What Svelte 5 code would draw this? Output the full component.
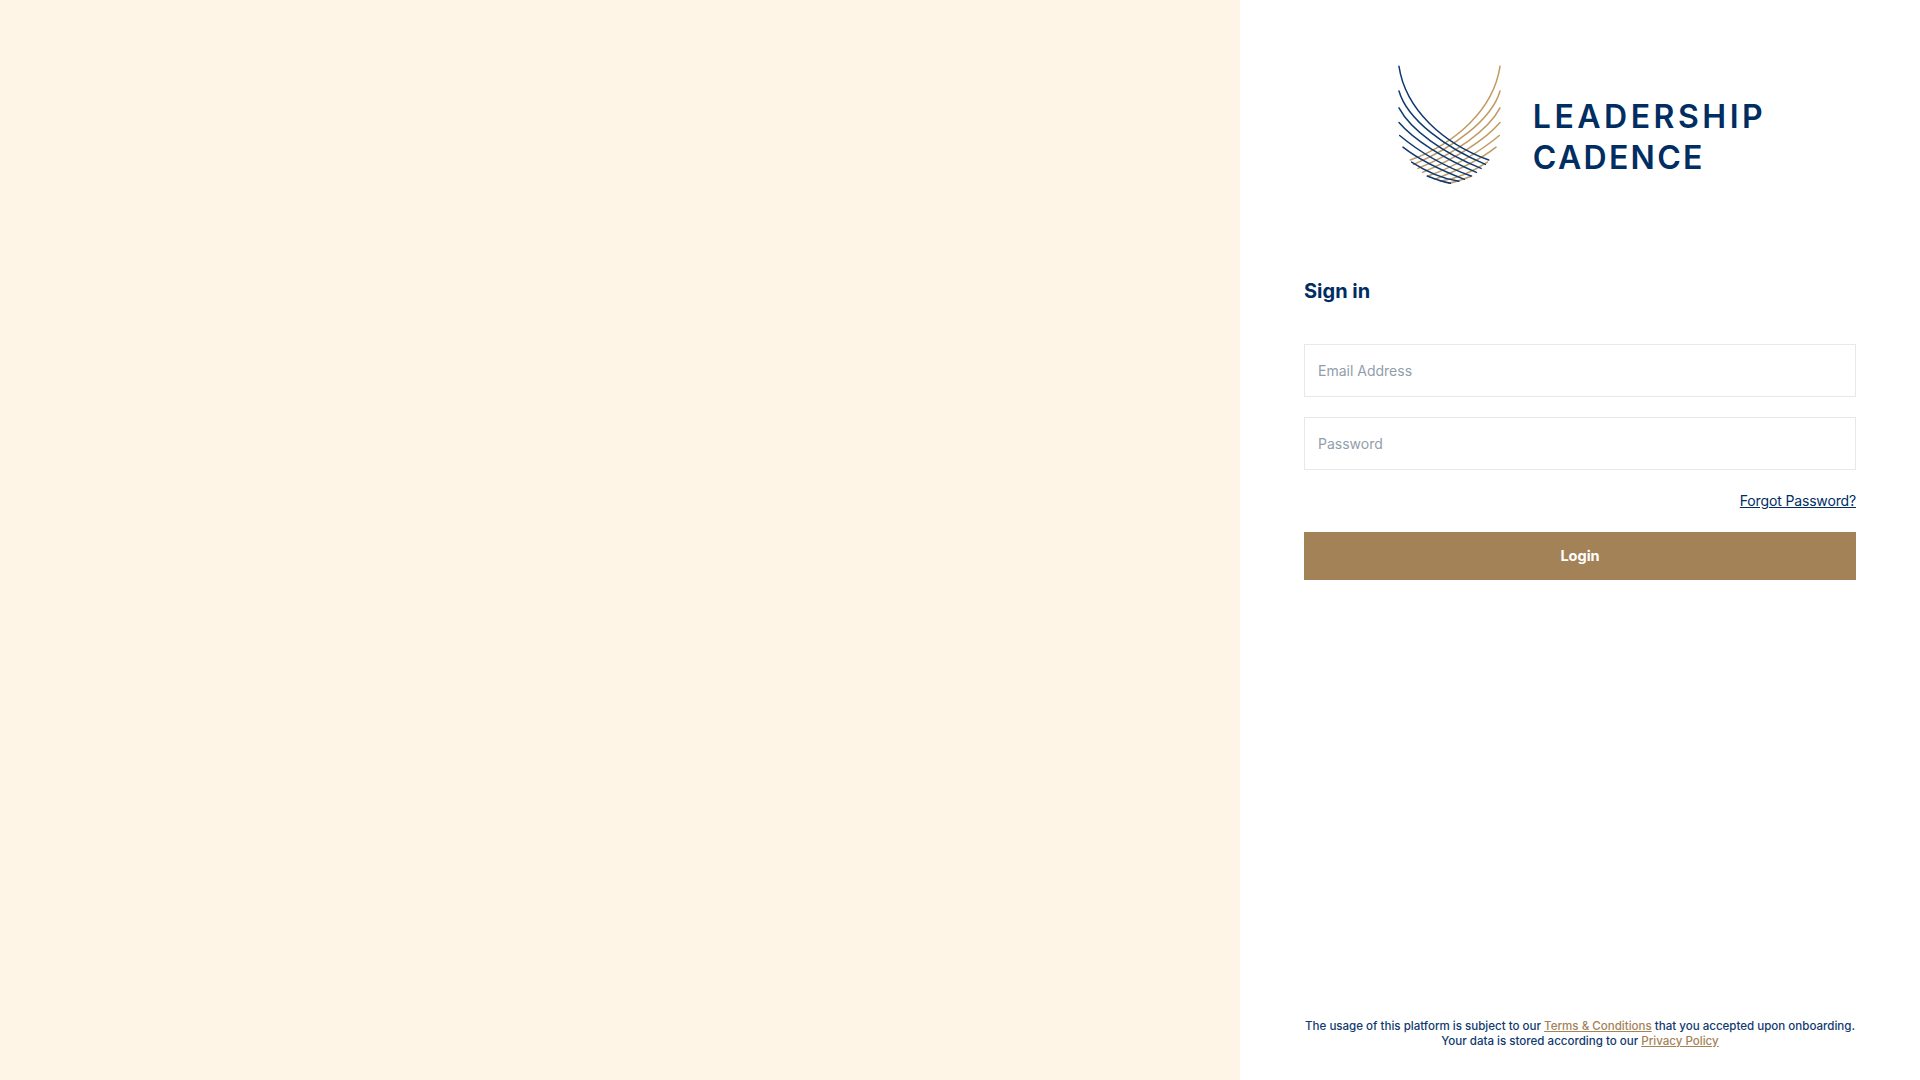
<script>
  const blue = [
    "M115 48C135 180 250 280 385 330",
    "M115 122C140 210 260 295 375 343",
    "M115 173C150 240 250 310 362 355",
    "M115 217C160 270 250 325 348 367",
    "M117 256C170 300 240 345 332 378",
    "M127 291C170 325 240 360 312 388",
    "M153 336C190 360 240 385 295 394",
    "M200 378C225 388 250 396 270 400",
  ];
  const gold = [
    "M419 48C399 180 284 280 149 330",
    "M419 122C394 210 274 295 159 343",
    "M419 173C384 240 284 310 172 355",
    "M419 217C374 270 284 325 186 367",
    "M417 256C364 300 294 345 202 378",
    "M407 291C364 325 294 360 222 388",
    "M381 336C344 360 294 385 239 394",
    "M334 378C309 388 284 396 264 400",
  ];
</script>

<div class="page">
  <div class="art"></div>
  <div class="panel">
    <div class="logo">
      <svg class="mark" viewBox="100 44 340 370" width="113" height="123" aria-hidden="true">
        {#each gold as d}
          <path {d} stroke="#c09a64" />
        {/each}
        {#each blue as d}
          <path {d} stroke="#0f3a70" />
        {/each}
      </svg>
      <div class="wordmark">LEADERSHIP<br /><span>CADENCE</span></div>
    </div>

    <form class="form">
      <h1>Sign in</h1>
      <input type="text" placeholder="Email Address" />
      <input type="password" placeholder="Password" />
      <div class="forgot"><a href="#forgot">Forgot Password?</a></div>
      <button type="button">Login</button>
    </form>

    <p class="legal">
      The usage of this platform is subject to our <a href="#terms">Terms &amp; Conditions</a> that you accepted upon onboarding.<br />
      Your data is stored according to our <a href="#privacy">Privacy Policy</a>
    </p>
  </div>
</div>

<style>
  :global(body) {
    margin: 0;
    font-family: Inter, "Liberation Sans", sans-serif;
    color: #002d62;
  }

  .page {
    display: flex;
    height: 1080px;
    overflow: hidden;
  }

  .art {
    flex: 0 0 1240px;
    background: #fff5e7;
  }

  .panel {
    flex: 1;
    display: flex;
    flex-direction: column;
    padding: 65px 64px 0;
    background: #fff;
  }

  .logo {
    display: flex;
    align-items: center;
    justify-content: center;
    gap: 26px;
    height: 123px;
  }

  .mark path {
    fill: none;
    stroke-width: 4.5;
    stroke-linecap: round;
  }

  .wordmark {
    padding-top: 20px;
    font-size: 32px;
    line-height: 41px;
    font-weight: 600;
    letter-spacing: 3.5px;
    color: #002d62;
  }

  .wordmark span {
    letter-spacing: 2.3px;
  }

  .form {
    display: flex;
    flex-direction: column;
    margin-top: 91px;
  }

  h1 {
    margin: 0 0 41px;
    font-size: 20px;
    line-height: 24px;
    font-weight: 700;
    color: #002d62;
  }

  input {
    box-sizing: border-box;
    height: 53px;
    margin-bottom: 20px;
    padding: 0 13px;
    border: 1px solid #e8e8e8;
    border-radius: 0;
    font: 14px Inter, "Liberation Sans", sans-serif;
    outline: none;
  }

  input::placeholder {
    color: #919eab;
  }

  .forgot {
    margin-top: 1px;
    text-align: right;
    font-size: 14px;
    line-height: 20px;
    letter-spacing: -0.15px;
  }

  .forgot a {
    color: #002d62;
  }

  button {
    height: 48px;
    margin-top: 21px;
    padding: 0 0 2px;
    border: 0;
    background: #a38257;
    color: #fff;
    font: 700 14.5px Inter, "Liberation Sans", sans-serif;
  }

  .legal {
    margin: auto 0 31px;
    text-align: center;
    font-size: 11.55px;
    line-height: 15px;
    font-weight: 500;
    color: #0f3a70;
  }

  .legal a {
    color: #a38257;
  }
</style>
